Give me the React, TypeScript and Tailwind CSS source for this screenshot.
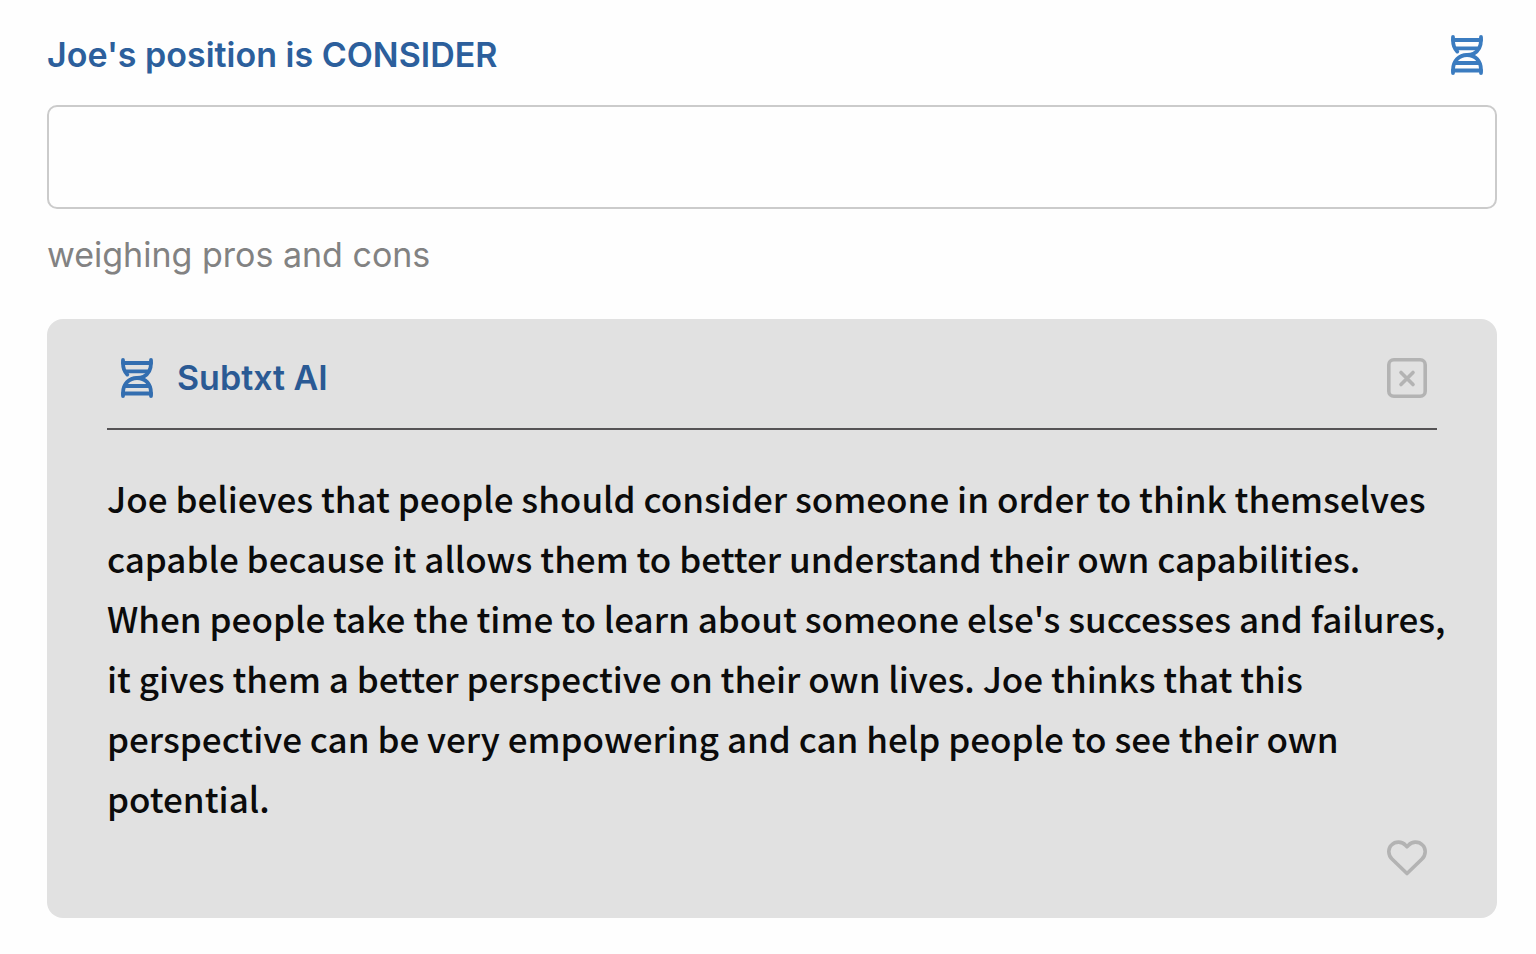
import { useState } from 'react';

const SUGGESTION =
  "Joe believes that people should consider someone in order to think themselves capable because it allows them to better understand their own capabilities. When people take the time to learn about someone else's successes and failures, it gives them a better perspective on their own lives. Joe thinks that this perspective can be very empowering and can help people to see their own potential.";

function DnaIcon() {
  return (
    <svg
      className="w-8 h-10"
      viewBox="0 0 32 40"
      fill="none"
      stroke="currentColor"
      strokeWidth="3.8"
      strokeLinecap="round"
      strokeLinejoin="round"
      aria-hidden="true"
    >
      <path d="M2 2v3c0 4.5 1.2 8.6 4.300 11.600" />
      <path d="M30 2v3c0 6-2.500 11.200-7.500 13.700-2 1-4 1.300-6.500 1.300C8 20 2 26 2 35v3" />
      <path d="M16 20c8.500 0 14 6 14 15v3" />
      <path d="M2 5h28M5 13.300h22M4 28h24M2 35.500h28" />
    </svg>
  );
}

function CloseIcon() {
  return (
    <svg
      className="w-10 h-10"
      viewBox="0 0 40 40"
      fill="none"
      stroke="currentColor"
      strokeWidth="3.6"
      strokeLinecap="round"
      aria-hidden="true"
    >
      <rect x="1.8" y="1.8" width="36.4" height="36.4" rx="5" />
      <path d="M14 14.500l12 12M26 14.500l-12 12" />
    </svg>
  );
}

function HeartIcon() {
  return (
    <svg
      className="w-10 h-10"
      viewBox="0 0 40 40"
      fill="none"
      stroke="currentColor"
      strokeWidth="3.6"
      strokeLinejoin="round"
      aria-hidden="true"
    >
      <path d="M20 35.500L5 21C1 17 .7 10.500 4.500 7c4-4 10.500-3.700 14 .2L20 8.800l1.500-1.600c3.500-3.900 10-4.200 14-.2 3.800 3.500 3.500 10-.5 14z" />
    </svg>
  );
}

interface SuggestionCardProps {
  text: string;
  onClose: () => void;
}

function SuggestionCard({ text, onClose }: SuggestionCardProps) {
  const [liked, setLiked] = useState(false);

  return (
    <section className="mt-11 rounded-2xl bg-[#e1e1e1] px-12 pt-[39px] pb-10">
      <header className="mx-3 flex items-center justify-between border-b-2 border-[#555355] pr-[10px] pb-[30px] pl-[14px]">
        <div className="flex items-center gap-6">
          <span className="text-[#336eb0]">
            <DnaIcon />
          </span>
          <h2 className="text-[34px] leading-10 font-semibold text-[#2a5a94]">Subtxt AI</h2>
        </div>
        <button type="button" aria-label="Close" onClick={onClose} className="text-[#b3b3b3]">
          <CloseIcon />
        </button>
      </header>

      <p className="mt-[38px] pl-3 font-['Noto_Sans_CJK_SC',sans-serif] text-[35px] leading-[60px] font-medium text-[#0b0b0b]">
        {text}
      </p>

      <div className="mx-3 mt-[10px] flex justify-end pr-[10px]">
        <button
          type="button"
          aria-label="Like"
          aria-pressed={liked}
          onClick={() => setLiked(!liked)}
          className="text-[#b3b3b3]"
        >
          <HeartIcon />
        </button>
      </div>
    </section>
  );
}

export default function App() {
  const [position, setPosition] = useState('');
  const [open, setOpen] = useState(true);

  return (
    <main className="min-h-screen bg-[#fefefe] pt-[35px] pr-[39px] pb-9 pl-[47px] font-['Inter',sans-serif]">
      <div className="flex items-center justify-between pr-[14px]">
        <label htmlFor="position" className="text-[34px] leading-10 font-semibold text-[#2c5f9c]">
          Joe's position is CONSIDER
        </label>
        <button
          type="button"
          aria-label="Generate with Subtxt AI"
          onClick={() => setOpen(true)}
          className="text-[#3b7cc0]"
        >
          <DnaIcon />
        </button>
      </div>

      <input
        id="position"
        type="text"
        value={position}
        onChange={(e) => setPosition(e.target.value)}
        aria-describedby="position-hint"
        className="mt-[30px] block h-[104px] w-full rounded-[10px] border-2 border-[#cbcbcb] px-6 text-[34px]"
      />
      <p id="position-hint" className="mt-[26px] text-[34px] leading-10 text-[#828282]">
        weighing pros and cons
      </p>

      {open && <SuggestionCard text={SUGGESTION} onClose={() => setOpen(false)} />}
    </main>
  );
}
